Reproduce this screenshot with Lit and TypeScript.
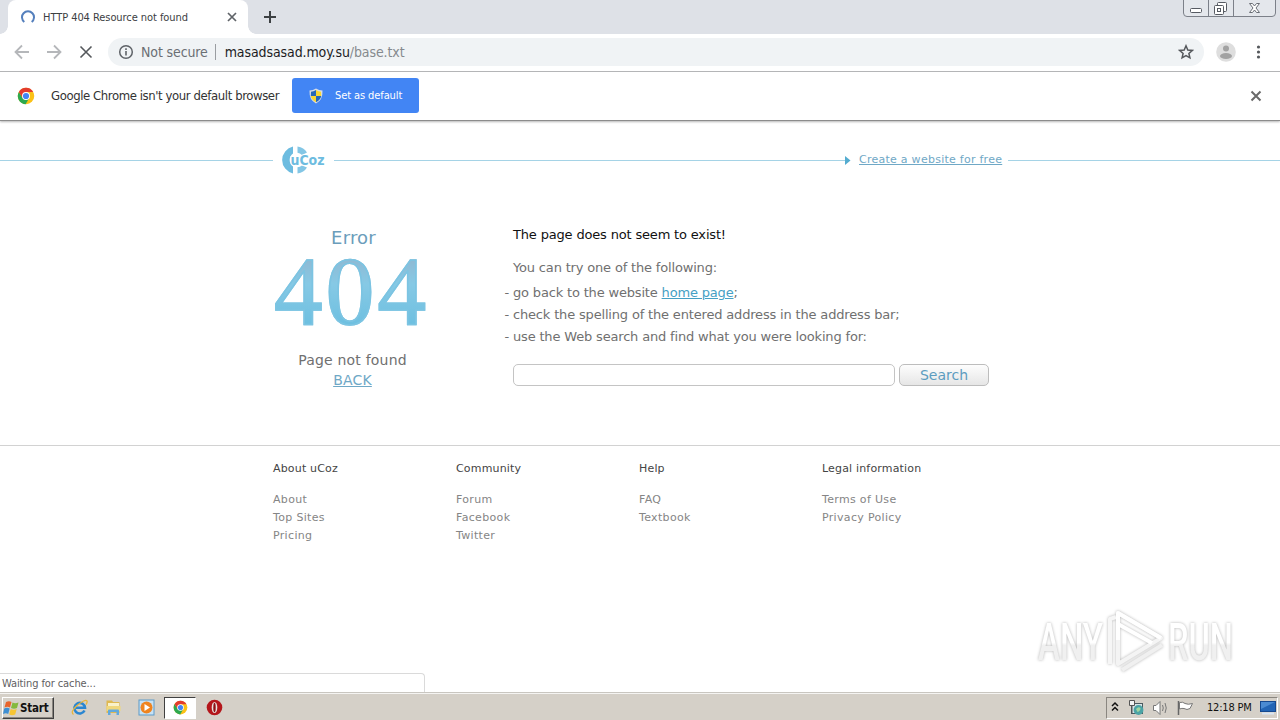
import { html, css, svg, LitElement } from 'lit';
import { customElement, property } from 'lit/decorators.js';

const chromeLogo = svg`
  <circle cx="12" cy="12" r="11" fill="#fbc116"/>
  <path d="M12 12 L7.6 14.5 L2.5 6.5 A11 11 0 0 0 11.5 23 L16.3 14.6 Z" fill="#2da94f"/>
  <path d="M2.5 6.5 A11 11 0 0 1 21.6 6.8 L12 6.8 L7.5 14.5 Z" fill="#e33b2e"/>
  <circle cx="12" cy="12" r="5.3" fill="#fff"/>
  <circle cx="12" cy="12" r="4.1" fill="#4285f4"/>
`;

@customElement('browser-bar')
export class BrowserBar extends LitElement {
  @property({ type: String }) title = 'HTTP 404 Resource not found';
  @property({ type: String }) host = 'masadsasad.moy.su';
  @property({ type: String }) path = '/base.txt';

  static get styles() {
    return css`
      :host {
        display: block;
        height: 122px;
        font-family: "DejaVu Sans Condensed", "DejaVu Sans", sans-serif;
        font-stretch: condensed;
        white-space: nowrap;
      }
      svg {
        display: block;
        flex: none;
      }
      .tabs {
        display: flex;
        height: 34px;
        background: #dee1e7;
        padding-left: 8px;
      }
      .tab {
        position: relative;
        box-sizing: border-box;
        width: 240px;
        display: flex;
        align-items: center;
        padding: 0 10px 0 13px;
        background: #fff;
        border-radius: 8px 8px 0 0;
        color: #3c4043;
        font-size: 11px;
      }
      .tab::before, .tab::after {
        content: '';
        position: absolute;
        bottom: 0;
        width: 8px;
        height: 8px;
      }
      .tab::before {
        left: -8px;
        background: radial-gradient(circle at 0 0, transparent 7.5px, #fff 8px);
      }
      .tab::after {
        right: -8px;
        background: radial-gradient(circle at 100% 0, transparent 7.5px, #fff 8px);
      }
      .title {
        flex: 1;
        margin-left: 8px;
        letter-spacing: -0.06px;
      }
      .plus {
        margin: 10px 0 0 15px;
      }
      .caption {
        margin-left: auto;
        margin-right: 3px;
      }
      .toolbar {
        box-sizing: border-box;
        display: flex;
        align-items: center;
        height: 38px;
        padding: 0 12px 1px 14px;
        background: #fff;
        border-bottom: 1px solid #b4b5b7;
      }
      .nav {
        display: flex;
        gap: 16px;
      }
      .omnibox {
        display: flex;
        flex: none;
        align-items: center;
        width: 1096px;
        height: 28px;
        box-sizing: border-box;
        margin-left: 14px;
        padding: 0 10px;
        border-radius: 14px;
        background: #f0f3f5;
        font-size: 14px;
        color: #6b6f74;
      }
      .secure {
        margin-left: 7px;
        letter-spacing: -0.12px;
      }
      .bar {
        width: 1px;
        height: 16px;
        margin: 0 9px 0 7px;
        background: #9a9da1;
      }
      .host {
        color: #1c1d1f;
        letter-spacing: -0.1px;
      }
      .path {
        color: #85898d;
        flex: 1;
        letter-spacing: -0.1px;
      }
      .avatar {
        margin: 0 12px 0 12px;
      }
      .infobar {
        box-sizing: border-box;
        display: flex;
        align-items: center;
        height: 49px;
        padding: 0 18px 1px 17px;
        background: #fff;
        border-bottom: 1px solid #8c8c8c;
        box-shadow: 0 1px 2px #b8b8b8;
        color: #333;
        font-size: 13px;
      }
      .message {
        margin-left: 16px;
        letter-spacing: -0.41px;
      }
      .default {
        display: flex;
        align-items: center;
        box-sizing: border-box;
        width: 127px;
        height: 35px;
        margin-left: 13px;
        padding: 0 16px;
        border: 0;
        border-radius: 3px;
        background: #4285f4;
        color: #fff;
        font: inherit;
        font-size: 11px;
        letter-spacing: -0.1px;
        gap: 11px;
      }
      .close {
        margin-left: auto;
      }
    `;
  }

  render() {
    return html`
      <div class="tabs">
        <div class="tab">
          <svg width="14" height="14" viewBox="0 0 14 14"><path d="M3.3 12 A6 6 0 1 1 10.7 12" fill="none" stroke="#5580bd" stroke-width="2"/></svg>
          <span class="title">${this.title}</span>
          <svg width="12" height="12" viewBox="0 0 12 12"><path d="M2 2 L10 10 M10 2 L2 10" stroke="#5f6368" stroke-width="1.7"/></svg>
        </div>
        <svg class="plus" width="14" height="14" viewBox="0 0 14 14"><path d="M7 1 V13 M1 7 H13" stroke="#3c4043" stroke-width="2"/></svg>
        <svg class="caption" width="94" height="18" viewBox="0 0 94 18">
          <path d="M.5 -1 V13 Q.5 16.500 4 16.500 H89 Q92.500 16.500 92.500 13 V-1" fill="#e4e7ec" stroke="#7c8089"/>
          <path d="M25.500 0 V16 M50.500 0 V16" stroke="#7c8089"/>
          <rect x="7.500" y="8.500" width="11" height="4" rx="1" fill="#fff" stroke="#565a62"/>
          <rect x="34.500" y="2.500" width="9" height="9" rx="1" fill="#fff" stroke="#565a62"/>
          <rect x="31.500" y="5.500" width="9" height="9" rx="1" fill="#fff" stroke="#565a62"/>
          <rect x="34.500" y="8.500" width="3" height="3" fill="#fff" stroke="#565a62"/>
          <path d="M66.500 3.500 h3 l2 2.500 l2 -2.500 h3 l-3.500 4.500 l3.500 4.500 h-3 l-2 -2.500 l-2 2.500 h-3 l3.500 -4.500 z" fill="#fff" stroke="#6a6e76"/>
        </svg>
      </div>
      <div class="toolbar">
        <div class="nav">
          <svg width="16" height="16" viewBox="0 0 16 16"><path d="M15 8 H2 M8 1.500 L1.500 8 L8 14.500" fill="none" stroke="#b5b7ba" stroke-width="1.800"/></svg>
          <svg width="16" height="16" viewBox="0 0 16 16"><path d="M1 8 H14 M8 1.500 L14.500 8 L8 14.500" fill="none" stroke="#b5b7ba" stroke-width="1.800"/></svg>
          <svg width="16" height="16" viewBox="0 0 16 16"><path d="M2.500 2.500 L13.500 13.500 M13.500 2.500 L2.500 13.500" stroke="#55585c" stroke-width="1.600"/></svg>
        </div>
        <div class="omnibox">
          <svg width="16" height="16" viewBox="0 0 16 16"><circle cx="8" cy="8" r="6.300" fill="none" stroke="#5f6368" stroke-width="1.500"/><path d="M8 7 V11.500 M8 4.300 V6" stroke="#5f6368" stroke-width="1.600"/></svg>
          <span class="secure">Not secure</span>
          <span class="bar"></span>
          <span class="host">${this.host}</span><span class="path">${this.path}</span>
          <svg width="16" height="16" viewBox="0 0 16 16"><path d="M8 1.800 L9.800 6 L14.300 6.400 L10.900 9.400 L11.900 13.800 L8 11.500 L4.100 13.800 L5.100 9.400 L1.700 6.400 L6.200 6 Z" fill="none" stroke="#55585c" stroke-width="1.500"/></svg>
        </div>
        <svg class="avatar" width="20" height="20" viewBox="0 0 20 20"><circle cx="10" cy="10" r="9.800" fill="#dedede"/><circle cx="10" cy="6.500" r="3" fill="#a2a2a2"/><ellipse cx="10" cy="14" rx="6" ry="3" fill="#a2a2a2"/></svg>
        <svg width="20" height="16" viewBox="0 0 20 16"><g fill="#55585c"><circle cx="10.500" cy="3" r="1.600"/><circle cx="10.500" cy="8" r="1.600"/><circle cx="10.500" cy="13" r="1.600"/></g></svg>
      </div>
      <div class="infobar">
        <svg width="18" height="18" viewBox="0 0 24 24">${chromeLogo}</svg>
        <span class="message">Google Chrome isn't your default browser</span>
        <button class="default">
          <svg width="16" height="16" viewBox="0 0 16 16">
            <path d="M8 .5 Q5 2.500 1.500 2.500 Q1 12 8 15.500 Q15 12 14.500 2.500 Q11 2.500 8 .5" fill="#d7dde6"/>
            <path d="M8 2 Q5.500 3.500 3 3.700 L2.800 8 H8 Z M8 8 H13.200 Q12.500 12 8 14.300 Z" fill="#2667b8"/>
            <path d="M8 2 Q10.500 3.500 13 3.700 L13.200 8 H8 Z M8 8 H2.800 Q3.500 12 8 14.300 Z" fill="#f8d633"/>
          </svg>
          Set as default
        </button>
        <svg class="close" width="12" height="12" viewBox="0 0 12 12"><path d="M1.500 1.500 L10.500 10.500 M10.500 1.500 L1.500 10.500" stroke="#6a6a6a" stroke-width="2"/></svg>
      </div>
    `;
  }
}

@customElement('error-page')
export class ErrorPage extends LitElement {
  columns = [
    { title: 'About uCoz', links: ['About', 'Top Sites', 'Pricing'] },
    { title: 'Community', links: ['Forum', 'Facebook', 'Twitter'] },
    { title: 'Help', links: ['FAQ', 'Textbook'] },
    { title: 'Legal information', links: ['Terms of Use', 'Privacy Policy'] },
  ];

  static get styles() {
    return css`
      :host {
        display: block;
        font-family: "DejaVu Sans", sans-serif;
        color: #707070;
        white-space: nowrap;
      }
      .top {
        display: flex;
        align-items: center;
        height: 77px;
      }
      .line {
        height: 1px;
        background: #a5d3e6;
      }
      .left {
        width: 273px;
      }
      .mid {
        width: 511px;
      }
      .right {
        flex: 1;
      }
      .create {
        width: 149px;
        margin-left: 8px;
        font-size: 11px;
        line-height: 16px;
        letter-spacing: 0.26px;
        margin-top: -1px;
      }
      .main {
        display: flex;
        box-sizing: border-box;
        height: 246px;
        padding-left: 273px;
      }
      .code {
        width: 159px;
        padding-top: 28px;
        text-align: center;
        font-size: 14px;
        line-height: 20px;
        letter-spacing: 0.2px;
      }
      .error {
        font-size: 18px;
        line-height: 22px;
        color: #6b9dbb;
        padding-left: 2px;
      }
      .number {
        width: 160px;
        height: 101px;
        padding-left: 1px;
        font-family: "Liberation Serif", serif;
        font-size: 97px;
        line-height: 86px;
        letter-spacing: 3.2px;
        text-align: left;
        background: linear-gradient(#8fb9d3 10px, #86c9e5 35px, #6cbfe0 78px);
        -webkit-background-clip: text;
        background-clip: text;
        -webkit-text-stroke: 1.6px #7cc4e2;
        color: transparent;
      }
      a {
        color: #45a0c4;
      }
      .back {
        color: #6fa8c6;
      }
      .help {
        margin-left: 81px;
        padding-top: 26px;
        font-size: 13px;
        line-height: 20px;
        letter-spacing: -0.17px;
      }
      .headline {
        color: #111;
      }
      .try {
        margin-top: 13px;
      }
      ul {
        list-style: none;
        margin: 4px 0 0 -8.500px;
        padding: 0;
        line-height: 22px;
      }
      form {
        display: flex;
        gap: 4px;
        margin-top: 16px;
      }
      input {
        box-sizing: border-box;
        width: 382px;
        height: 22px;
        border: 1px solid #c4c4c4;
        border-radius: 5px;
        padding: 0;
        background: #fff;
      }
      button {
        width: 90px;
        height: 22px;
        padding: 0;
        border: 1px solid #bdbdbd;
        border-radius: 5px;
        background: linear-gradient(#fdfdfd, #e6e6e6);
        font-family: inherit;
        font-size: 14px;
        line-height: 18px;
        color: #5d9dc0;
      }
      footer {
        display: grid;
        grid-template-columns: repeat(4, 183px);
        padding: 14px 0 0 273px;
        border-top: 1px solid #d2d2d2;
        font-size: 11px;
        line-height: 18px;
        letter-spacing: 0.33px;
        color: #858585;
      }
      h4 {
        margin: 0 0 13px;
        font: inherit;
        letter-spacing: 0.17px;
        color: #444;
      }
    `;
  }

  render() {
    return html`
      <div class="top">
        <div class="line left"></div>
        <svg width="61" height="34" viewBox="0 0 61 34">
          <g fill="#6dbce0">
            <path d="M20 2.600 V9.500 A8 8 0 0 0 20 22.500 V29.400 A13.700 13.700 0 0 1 20 2.600 Z"/>
            <path d="M24.500 2.600 Q31 3.500 34 8.500 L29 11 Q27 9 24.500 8.800 Z M24.500 29.400 Q31 28.500 34 23.500 L29 21.500 Q27 23 24.500 23.200 Z" opacity=".85"/>
            <text x="17.500" y="20.500" font-size="13.500" font-weight="bold" textLength="34" lengthAdjust="spacingAndGlyphs" stroke="#fff" stroke-width="2" paint-order="stroke">uCoz</text>
          </g>
        </svg>
        <div class="line mid"></div>
        <svg width="6" height="9" viewBox="0 0 6 9"><path d="M0 0 L5.500 4.500 L0 9 Z" fill="#54acd0"/></svg>
        <div class="create"><a class="back" href="#">Create a website for free</a></div>
        <div class="line right"></div>
      </div>
      <div class="main">
        <div class="code">
          <div class="error">Error</div>
          <div class="number">404</div>
          <div>Page not found</div>
          <a class="back" href="#">BACK</a>
        </div>
        <div class="help">
          <div class="headline">The page does not seem to exist!</div>
          <div class="try">You can try one of the following:</div>
          <ul>
            <li>- go back to the website <a href="#">home page</a>;</li>
            <li>- check the spelling of the entered address in the address bar;</li>
            <li>- use the Web search and find what you were looking for:</li>
          </ul>
          <form>
            <input type="text">
            <button type="button">Search</button>
          </form>
        </div>
      </div>
      <footer>
        ${this.columns.map(col => html`
          <div>
            <h4>${col.title}</h4>
            ${col.links.map(link => html`<div>${link}</div>`)}
          </div>
        `)}
      </footer>
    `;
  }
}

@customElement('task-bar')
export class TaskBar extends LitElement {
  @property({ type: String }) time = '12:18 PM';

  static get styles() {
    return css`
      :host {
        box-sizing: border-box;
        display: flex;
        align-items: center;
        height: 28px;
        padding: 2px 2px 0 2px;
        background: #d5d0c8;
        border-top: 1px solid #c9c6c0;
        box-shadow: inset 0 1px #f5f4f2;
        font-family: "DejaVu Sans Condensed", "DejaVu Sans", sans-serif;
        font-stretch: condensed;
        font-size: 11px;
        color: #111;
        white-space: nowrap;
      }
      svg {
        display: block;
        flex: none;
      }
      .start {
        box-sizing: border-box;
        display: flex;
        align-items: center;
        width: 52px;
        height: 22px;
        border: 1px solid;
        border-color: #fff #404040 #404040 #fff;
        box-shadow: inset -1px -1px #8a8680;
        font-weight: bold;
        font-size: 11.5px;
        letter-spacing: -0.2px;
      }
      .quick {
        display: flex;
        align-items: center;
        margin-left: 9.5px;
      }
      .quick > div {
        box-sizing: border-box;
        width: 32px;
        height: 22px;
        margin-right: 1.65px;
        display: flex;
        align-items: center;
        justify-content: center;
      }
      .quick > .active {
        background: #fff;
        border: 1px solid;
        border-color: #404040 #fff #fff #404040;
      }
      .tray {
        box-sizing: border-box;
        display: flex;
        align-items: center;
        width: 172px;
        height: 22px;
        margin-left: auto;
        padding-left: 4px;
        border: 1px solid;
        border-color: #8a8680 #fff #fff #8a8680;
      }
      .time {
        margin: 0 7px 0 10px;
        width: 46px;
        letter-spacing: -0.2px;
      }
    `;
  }

  render() {
    return html`
      <div class="start">
        <svg width="17" height="16" viewBox="0 0 17 16">
          <path d="M3 2 Q6 .5 8.500 2 L7 7.500 Q4.500 6 1.500 7.500 Z" fill="#e8642c"/>
          <path d="M9.500 2.500 Q12 4 15.500 2.500 L14 8 Q11 9.500 8 8 Z" fill="#84b93e"/>
          <path d="M1.200 8.500 Q4 7 6.700 8.500 L5.200 14 Q3 12.500 0 14 Z" fill="#3f8fd2"/>
          <path d="M7.700 9 Q10.500 10.500 13.700 9 L12.200 14.500 Q9 16 6.200 14.500 Z" fill="#f6c534"/>
        </svg>
        Start
      </div>
      <div class="quick">
        <div>
          <svg width="17" height="17" viewBox="0 0 17 17">
            <path d="M13.500 11.500 A5.300 5.300 0 1 1 14 8.800 H5" fill="none" stroke="#2a86d1" stroke-width="2.600"/>
            <path d="M2.500 15.500 Q-1 13 5.500 7 Q14.500 -.5 16 2 Q16.500 3.500 15 5.500" fill="none" stroke="#e8b53a" stroke-width="1.300"/>
          </svg>
        </div>
        <div>
          <svg width="17" height="17" viewBox="0 0 17 17">
            <path d="M1.500 1.500 H7 L8 3 H14.500 V14 H1.500 Z" fill="#dfb850"/>
            <rect x="3" y="4" width="11" height="4" fill="#f9f1c9"/>
            <rect x="1.500" y="7" width="14" height="5" fill="#f0d77c"/>
            <path d="M3 16 V11.500 Q3 10.500 4 10.500 H13 Q14 10.500 14 11.500 V16 H11.500 V13 H5.500 V16 Z" fill="#62a9dc"/>
          </svg>
        </div>
        <div>
          <svg width="17" height="17" viewBox="0 0 17 17">
            <rect x="1" y="1" width="15" height="15" fill="#c7e2f5" stroke="#5c9ac8"/>
            <circle cx="8.500" cy="8.500" r="6" fill="#ef8420"/>
            <path d="M6.500 5 L12 8.500 L6.500 12 Z" fill="#fff"/>
          </svg>
        </div>
        <div class="active"><svg width="15" height="15" viewBox="0 0 24 24">${chromeLogo}</svg></div>
        <div>
          <svg width="17" height="17" viewBox="0 0 17 17">
            <circle cx="8.500" cy="8.500" r="7.800" fill="#b4161b"/>
            <ellipse cx="8.500" cy="8.500" rx="2.800" ry="5.600" fill="#e9e3e0"/>
            <ellipse cx="8.500" cy="8.500" rx="1.200" ry="4.800" fill="#8e1014"/>
          </svg>
        </div>
      </div>
      <div class="tray">
        <svg width="8" height="14" viewBox="0 0 8 14"><path d="M1 5 L4 2 L7 5 M1 9.500 L4 6.500 L7 9.500" fill="none" stroke="#111" stroke-width="1.500"/></svg>
        <svg width="78" height="18" viewBox="0 0 78 18">
          <rect x="12.500" y="4.500" width="11" height="10" fill="#d8e4e8" stroke="#4a5a60"/>
          <circle cx="19.500" cy="11" r="4.900" fill="#4ba3a5"/>
          <path d="M17 10 q2.500 -3 4.500 -1 q0 3 -3 4 z" fill="#9ed6a0"/>
          <path d="M10.500 1.500 h5 v5 h-5 z M13 6.500 v8" fill="#f4f4f4" stroke="#555"/>
          <path d="M34.500 6.500 H37 L41 2.500 V15.500 L37 11.500 H34.500 Z" fill="#fff" stroke="#777"/>
          <path d="M43.500 6 Q45 9 43.500 12 M46 4 Q48.500 9 46 14" fill="none" stroke="#777"/>
          <path d="M59.500 2 V16" stroke="#666" stroke-width="1.500"/>
          <path d="M60.500 3.500 Q64 2.500 66 4.500 Q69 6 73.500 4.500 L71 9.500 Q68 11.500 65 9.500 Q63 9 60.500 10 Z" fill="#fff" stroke="#777"/>
        </svg>
        <span class="time">${this.time}</span>
        <svg width="16" height="14" viewBox="0 0 16 14">
          <rect x=".5" y=".5" width="15" height="10" fill="#2365b5" stroke="#16498f"/>
          <path d="M1 1 H15 L1 8 Z" fill="#4b8bd2"/>
          <rect x="2" y="11.500" width="12" height="2" fill="#d9e6f3"/>
        </svg>
      </div>
    `;
  }
}

@customElement('app-root')
export class AppRoot extends LitElement {
  static get styles() {
    return css`
      :host {
        position: relative;
        display: flex;
        flex-direction: column;
        width: 1280px;
        height: 720px;
        overflow: hidden;
        background: #fff;
      }
      error-page {
        flex: 1;
      }
      .status {
        position: absolute;
        left: 0;
        bottom: 28px;
        box-sizing: border-box;
        width: 425px;
        height: 19px;
        padding-left: 2px;
        border: 1px solid #dadada;
        border-width: 1px 1px 0 0;
        border-radius: 0 4px 0 0;
        background: #fff;
        font: 11px/19px "DejaVu Sans Condensed", "DejaVu Sans", sans-serif;
        letter-spacing: -0.1px;
        color: #5f6062;
      }
      .watermark {
        position: absolute;
        left: 1030px;
        top: 602px;
        overflow: visible;
        font-family: Roboto, sans-serif;
        filter: drop-shadow(0 0 1.5px #b4b4b4);
      }
    `;
  }

  render() {
    return html`
      <browser-bar></browser-bar>
      <error-page></error-page>
      <task-bar></task-bar>
      <div class="status">Waiting for cache...</div>
      <svg class="watermark" width="230" height="80" viewBox="0 0 230 80">
        <defs>
          <linearGradient id="fade" x1="0" y1="0" x2="0" y2="1">
            <stop offset=".5" stop-color="#fff"/>
            <stop offset=".55" stop-color="#f0f0f0"/>
          </linearGradient>
        </defs>
        <g fill="url(#fade)" font-size="51" font-weight="500">
          <text x="8" y="58" textLength="65" lengthAdjust="spacingAndGlyphs">ANY</text>
          <text x="138" y="58" textLength="65" lengthAdjust="spacingAndGlyphs">RUN</text>
        </g>
        <g fill="none" stroke-width="4" stroke-linejoin="round">
          <path d="M80 62 V17 L86 15" stroke="#f6f6f6"/>
          <path d="M88 62 V11 L131 36 L88 62 Z" stroke="#f4f4f4"/>
          <path d="M88 38 V11 L131 36 M88 22 L122 41" stroke="#fff"/>
          <path d="M92 68 L132 43" stroke="#f0f0f0"/>
        </g>
      </svg>
    `;
  }
}
